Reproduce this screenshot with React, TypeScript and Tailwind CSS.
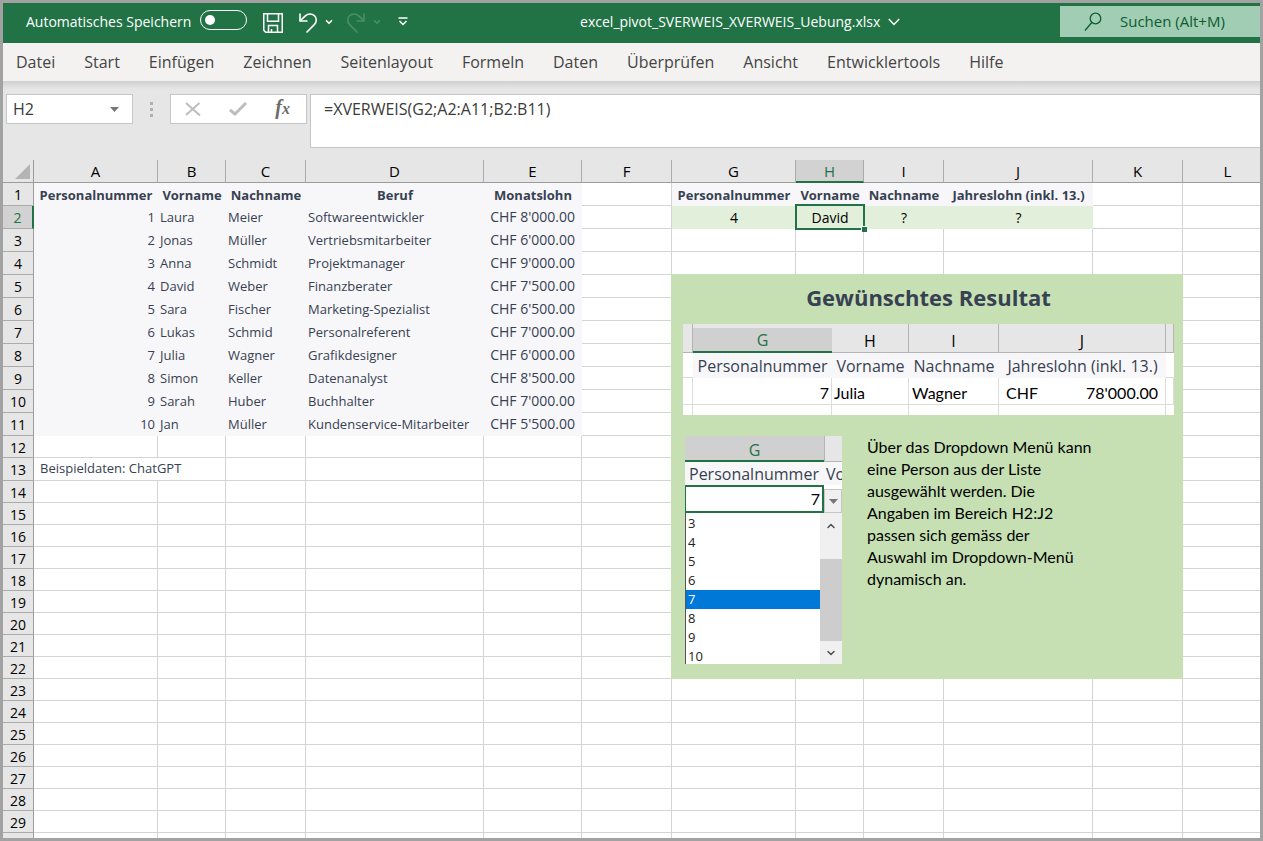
import { useState, type ReactNode } from "react";
import { ChevronDown } from "lucide-react";

const MENU = [
  "Datei",
  "Start",
  "Einfügen",
  "Zeichnen",
  "Seitenlayout",
  "Formeln",
  "Daten",
  "Überprüfen",
  "Ansicht",
  "Entwicklertools",
  "Hilfe",
];

const COLUMNS = [
  { name: "A", width: 124 },
  { name: "B", width: 68 },
  { name: "C", width: 80 },
  { name: "D", width: 178 },
  { name: "E", width: 98 },
  { name: "F", width: 90 },
  { name: "G", width: 124 },
  { name: "H", width: 68 },
  { name: "I", width: 80 },
  { name: "J", width: 149 },
  { name: "K", width: 90 },
  { name: "L", width: 90 },
];

const ROW_HEADER_WIDTH = 31;
const SHEET_WIDTH = COLUMNS.reduce((sum, column) => sum + column.width, ROW_HEADER_WIDTH);
const LAST_ROW = 29;
// one extra blank row closes the sheet at the bottom edge
const ROWS = Array.from({ length: LAST_ROW + 1 }, (_, i) => i + 1);

const STAFF_HEAD = ["Personalnummer", "Vorname", "Nachname", "Beruf", "Monatslohn"];
const STAFF = [
  ["1", "Laura", "Meier", "Softwareentwickler", "CHF 8'000.00"],
  ["2", "Jonas", "Müller", "Vertriebsmitarbeiter", "CHF 6'000.00"],
  ["3", "Anna", "Schmidt", "Projektmanager", "CHF 9'000.00"],
  ["4", "David", "Weber", "Finanzberater", "CHF 7'500.00"],
  ["5", "Sara", "Fischer", "Marketing-Spezialist", "CHF 6'500.00"],
  ["6", "Lukas", "Schmid", "Personalreferent", "CHF 7'000.00"],
  ["7", "Julia", "Wagner", "Grafikdesigner", "CHF 6'000.00"],
  ["8", "Simon", "Keller", "Datenanalyst", "CHF 8'500.00"],
  ["9", "Sarah", "Huber", "Buchhalter", "CHF 7'000.00"],
  ["10", "Jan", "Müller", "Kundenservice-Mitarbeiter", "CHF 5'500.00"],
];

const LOOKUP_HEAD = ["Personalnummer", "Vorname", "Nachname", "Jahreslohn (inkl. 13.)"];
const LOOKUP = ["4", "David", "?", "?"];

function IconButton({ label, className, children }: { label: string; className?: string; children: ReactNode }) {
  return (
    <button type="button" aria-label={label} className={`flex shrink-0 items-center justify-center ${className ?? ""}`}>
      {children}
    </button>
  );
}

function UndoIcon() {
  return (
    <svg viewBox="0 0 20 22" className="h-[22px] w-5" fill="none" stroke="currentColor" strokeWidth="1.6">
      <path d="M2 1.500v7.500h7.500" />
      <path d="M2.500 8.500L7 4.200C8.600 2.700 10.200 2 12 2c3.600 0 6.300 2.600 6.300 6 0 1.900-.7 3.300-2 4.600L8.500 20.500" />
    </svg>
  );
}

function TitleBar() {
  return (
    <header className="flex h-10 shrink-0 items-center bg-[#217346] pb-[3px] text-sm text-white">
      <div className="flex items-center pl-[23px]">
        <label htmlFor="autosave" className="whitespace-nowrap">
          Automatisches Speichern
        </label>
        <input
          id="autosave"
          type="checkbox"
          role="switch"
          className="mb-[3px] ml-[9px] h-5 w-[47px] appearance-none rounded-full border border-white before:mt-1 before:ml-1 before:block before:size-[10px] before:rounded-full before:bg-white before:content-['']"
        />
        <IconButton label="Speichern" className="ml-4 pt-[2px]">
          <svg viewBox="0 0 20 20" className="size-5" fill="none" stroke="currentColor" strokeWidth="1.5">
            <path d="M.75.75h18.500v18.500H2.750l-2-2z" />
            <path d="M4.500.75v7.500h11V.75" />
            <path d="M5.500 19v-6.500h9V19M8.500 19v-3" />
          </svg>
        </IconButton>
        <IconButton label="Rückgängig" className="ml-[15px] pt-[2px]">
          <UndoIcon />
        </IconButton>
        <IconButton label="Rückgängig Verlauf" className="ml-[6px]">
          <ChevronDown className="size-[10px]" strokeWidth={4} />
        </IconButton>
        <IconButton label="Wiederholen" className="ml-3 pt-[2px] text-[#4a8f69]">
          <span className="-scale-x-100">
            <UndoIcon />
          </span>
        </IconButton>
        <IconButton label="Wiederholen Verlauf" className="ml-[6px] text-[#4a8f69]">
          <ChevronDown className="size-[10px]" strokeWidth={4} />
        </IconButton>
        <IconButton label="Symbolleiste anpassen" className="ml-4">
          <svg viewBox="0 0 10 9" className="h-[9px] w-[10px]" fill="none" stroke="currentColor" strokeWidth="1.400">
            <path d="M.5 1h9M1.500 4L5 7.500 8.500 4" />
          </svg>
        </IconButton>
      </div>
      <button type="button" className="flex flex-1 items-center justify-center gap-2 whitespace-nowrap pl-3">
        excel_pivot_SVERWEIS_XVERWEIS_Uebung.xlsx
        <svg viewBox="0 0 12 8" className="h-2 w-3" fill="none" stroke="currentColor" strokeWidth="1.400">
          <path d="M.8 1L6 6.500 11.200 1" />
        </svg>
      </button>
      <label className="flex h-[31px] w-[200px] items-center gap-[18px] bg-[#a0cdb3] pl-6 text-[15px] text-[#0e5c2f]">
        <svg viewBox="0 0 18 20" className="h-5 w-[18px] shrink-0" fill="none" stroke="currentColor" strokeWidth="1.300">
          <circle cx="11.500" cy="6.500" r="5.300" />
          <path d="M7.800 10.500L1 18.500" />
        </svg>
        <input
          type="search"
          aria-label="Suchen"
          placeholder="Suchen (Alt+M)"
          className="w-full min-w-0 bg-transparent outline-none placeholder:text-[#0e5c2f]"
        />
      </label>
    </header>
  );
}

function FormulaBar() {
  return (
    <div className="flex shrink-0 items-start bg-[linear-gradient(to_bottom,#cfcfcf_0,#e6e6e6_8px)] pt-[13px] pb-3 pl-[3px] text-base text-[#3b3b3b]">
      <div className="flex h-[30px] w-[127px] items-center border border-[#c6c6c6] bg-white pr-[13px]">
        <input aria-label="Namenfeld" defaultValue="H2" className="w-full min-w-0 pl-[6px] outline-none" />
        <IconButton label="Namen anzeigen">
          <svg viewBox="0 0 9 5" className="h-[5px] w-[9px]" fill="#777">
            <path d="M0 0h9L4.500 5z" />
          </svg>
        </IconButton>
      </div>
      <div className="mt-2 ml-[17px] flex flex-col gap-[3px]">
        <span className="size-[3px] bg-[#b0b0b0]" />
        <span className="size-[3px] bg-[#b0b0b0]" />
        <span className="size-[3px] bg-[#b0b0b0]" />
      </div>
      <div className="ml-[17px] flex h-[30px] w-[137px] items-center justify-between border border-[#c6c6c6] bg-white pr-4 pl-[14px]">
        <IconButton label="Abbrechen">
          <svg viewBox="0 0 16 14" className="h-[14px] w-4" fill="none" stroke="#bdbdbd" strokeWidth="2">
            <path d="M1 1l14 12.500M14.500 1L1 13" />
          </svg>
        </IconButton>
        <IconButton label="Eingeben">
          <svg viewBox="0 0 18 14" className="h-[14px] w-[18px]" fill="none" stroke="#bdbdbd" strokeWidth="3">
            <path d="M1 8l5 4L17 1" />
          </svg>
        </IconButton>
        <button
          type="button"
          aria-label="Funktion einfügen"
          className="font-['Liberation_Serif',serif] text-xl leading-5 font-bold text-[#6b6b6b] italic"
        >
          f<span className="text-base">x</span>
        </button>
      </div>
      <textarea
        aria-label="Bearbeitungsleiste"
        defaultValue="=XVERWEIS(G2;A2:A11;B2:B11)"
        className="ml-[3px] h-[54px] min-w-0 flex-1 resize-none border border-r-0 border-[#c6c6c6] bg-white px-[13px] py-1 leading-5 outline-none"
      />
    </div>
  );
}

function PreviewTable() {
  const line = "border-r border-b border-[#dcdcdc]";
  const head = "border-r border-b border-[#b4b4b4] bg-[#e6e6e6] font-normal";

  return (
    <table className="w-full table-fixed border-separate border-spacing-0 bg-white text-base leading-5 whitespace-nowrap text-black">
      <colgroup>
        <col className="w-[10px]" />
        <col className="w-[139px]" />
        <col className="w-[77px]" />
        <col className="w-[90px]" />
        <col className="w-[167px]" />
        <col />
      </colgroup>
      <thead>
        <tr className="h-[29px]">
          <td className={head} />
          <th className="border-t-4 border-b-2 border-t-[#e6e6e6] border-b-[#217346] bg-[#d0d0d0] font-normal text-[#217346]">
            G
          </th>
          <th className={`${head} pt-[6px]`}>H</th>
          <th className={`${head} pt-[6px]`}>I</th>
          <th className={`${head} pt-[6px]`}>J</th>
          <td className={head} />
        </tr>
      </thead>
      <tbody>
        <tr className="h-[25px] text-[#374151]">
          <td className="border-b border-[#dcdcdc]" />
          {LOOKUP_HEAD.map((text) => (
            <td key={text} className="bg-[#f7f7fa] text-center font-medium">
              {text}
            </td>
          ))}
          <td className="border-b border-[#dcdcdc]" />
        </tr>
        <tr className="h-[27px] font-['Lato',sans-serif]">
          <td className={line} />
          <td className={`${line} pt-1 pr-[2px] text-right`}>7</td>
          <td className={`${line} pt-1 pl-[2px]`}>Julia</td>
          <td className={`${line} pt-1 pl-[3px]`}>Wagner</td>
          <td className={`${line} px-[7px] pt-1`}>
            <div className="flex justify-between">
              <span>CHF</span>
              <span>78'000.00</span>
            </div>
          </td>
          <td className={line} />
        </tr>
        <tr className="h-[10px]">
          <td className="border-r border-[#dcdcdc]" />
          <td className="border-r border-[#dcdcdc]" />
          <td className="border-r border-[#dcdcdc]" />
          <td className="border-r border-[#dcdcdc]" />
          <td className="border-r border-[#dcdcdc]" />
          <td />
        </tr>
      </tbody>
    </table>
  );
}

function DropdownPreview() {
  const [picked, setPicked] = useState("7");

  return (
    <div className="w-[157px] shrink-0 overflow-hidden bg-white">
      <div className="flex h-[26px] text-base leading-6">
        <div className="w-[139px] border-b-2 border-[#217346] bg-[#d0d0d0] pt-[2px] text-center text-[#217346]">G</div>
        <div className="flex-1 border-b border-l border-[#b4b4b4] bg-[#e6e6e6]" />
      </div>
      <div className="flex h-[23px] items-center bg-[#f7f7fa] text-base font-medium whitespace-nowrap text-[#374151]">
        <div className="w-[139px] shrink-0 pl-1">Personalnummer</div>
        <div className="pl-[2px]">Vo</div>
      </div>
      <div className="flex h-7">
        <label
          htmlFor="nummer"
          className="w-[139px] border-2 border-l border-[#217346] pr-[2px] text-right font-['Lato',sans-serif] text-base leading-6 text-black"
        >
          {picked}
        </label>
        <IconButton label="Liste öffnen" className="mt-1 flex-1 border border-[#c6c6c6] bg-[#f0f0f0]">
          <svg viewBox="0 0 9 5" className="h-[5px] w-[9px]" fill="#777">
            <path d="M0 0h9L4.500 5z" />
          </svg>
        </IconButton>
      </div>
      <div className="flex h-[151px] border-l border-[#555]">
        <select
          id="nummer"
          size={8}
          value={picked}
          onChange={(event) => setPicked(event.target.value)}
          className="h-[152px] w-[134px] shrink-0 appearance-none overflow-hidden bg-white pt-px text-[13px] text-[#222] outline-none"
        >
          {["3", "4", "5", "6", "7", "8", "9", "10"].map((value) => (
            <option
              key={value}
              value={value}
              className="h-[19px] min-h-0 px-[2px] py-0 leading-[19px] checked:bg-[linear-gradient(#0078d7,#0078d7)] checked:text-white"
            >
              {value}
            </option>
          ))}
        </select>
        <div className="flex flex-1 flex-col bg-[#f0f0f0] text-[#505050]">
          <IconButton label="Nach oben" className="h-[46px] pb-5">
            <ChevronDown className="size-3 rotate-180" strokeWidth={3} />
          </IconButton>
          <div className="flex-1 bg-[#cdcdcd]" />
          <IconButton label="Nach unten" className="h-[23px]">
            <ChevronDown className="size-3" strokeWidth={3} />
          </IconButton>
        </div>
      </div>
    </div>
  );
}

function ResultPanel() {
  return (
    <div className="pt-[7px] pr-[9px] pl-[11px]">
      <h2 className="text-center text-[22px] leading-[30px] font-bold text-[#374151]">Gewünschtes Resultat</h2>
      <div className="mt-3">
        <PreviewTable />
      </div>
      <div className="mt-[21px] flex gap-[25px] pl-[2px]">
        <DropdownPreview />
        <p className="font-['Lato',sans-serif] text-base leading-[22px] text-black">
          Über das Dropdown Menü kann
          <br />
          eine Person aus der Liste
          <br />
          ausgewählt werden. Die
          <br />
          Angaben im Bereich H2:J2
          <br />
          passen sich gemäss der
          <br />
          Auswahl im Dropdown-Menü
          <br />
          dynamisch an.
        </p>
      </div>
    </div>
  );
}

function SheetRow({ row }: { row: number }) {
  const staff = row <= 11;
  const inPanel = row >= 5 && row <= 22;
  const tall = row <= 11 || row === 13;

  return (
    <tr className={tall ? "h-[23px]" : "h-[22px]"}>
      <th
        className={
          row === 2
            ? "border-r-2 border-b border-r-[#217346] border-b-[#ababab] bg-[#d2d2d2] pt-[2px] text-sm leading-[18px] font-normal text-[#217346]"
            : "border-r border-b border-r-[#9b9b9b] border-b-[#ababab] bg-[#e6e6e6] pt-[2px] text-sm leading-[18px] font-normal text-black"
        }
      >
        {row <= LAST_ROW && row}
      </th>
      {COLUMNS.map((column, index) => {
        const name = column.name;
        if (row === 13 && name === "B") return null;
        if (inPanel && "GHIJK".includes(name)) {
          if (row !== 5 || name !== "G") return null;
          return (
            <td key={name} colSpan={5} rowSpan={18} className="bg-[#c6e0b4] align-top">
              <ResultPanel />
            </td>
          );
        }
        if (row === 13 && name === "A") {
          return (
            <td key={name} colSpan={2} className="border-r border-b border-[#d4d4d4] pb-[2px] pl-[6px]">
              Beispieldaten: ChatGPT
            </td>
          );
        }
        if (staff && index < 5) {
          if (row === 1) {
            return (
              <th key={name} className="bg-[#f7f7fa] font-bold">
                {STAFF_HEAD[index]}
              </th>
            );
          }
          return (
            <td
              key={name}
              className={
                index === 0
                  ? "bg-[#f7f7fa] pr-[3px] pb-[2px] text-right"
                  : index === 4
                    ? "bg-[#f7f7fa] pr-[7px] pb-[2px] text-right text-sm leading-[18px]"
                    : "bg-[#f7f7fa] pb-[2px] pl-[2px]"
              }
            >
              {STAFF[row - 2][index]}
            </td>
          );
        }
        if (row <= 2 && index >= 6 && index <= 9) {
          if (row === 1) {
            return (
              <th key={name} className="bg-[#f7f7fa] font-bold">
                {LOOKUP_HEAD[index - 6]}
              </th>
            );
          }
          return (
            <td key={name} className="relative bg-[#e2efda] text-center text-sm leading-5 text-black">
              {LOOKUP[index - 6]}
              {name === "H" && (
                <span className="pointer-events-none absolute -inset-x-px -top-[2px] -bottom-px z-10 border-2 border-[#217346]">
                  <span className="absolute -right-1 -bottom-1 size-[6px] border-t border-l border-white bg-[#217346]" />
                </span>
              )}
            </td>
          );
        }
        const edge =
          inPanel && name === "F"
            ? "border-r-[#c6e0b4] border-b-[#d4d4d4]"
            : row === 4 && "GHIJK".includes(name)
              ? "border-r-[#d4d4d4] border-b-[#c6e0b4]"
              : "border-[#d4d4d4]";
        return <td key={name} className={`border-r border-b ${edge}`} />;
      })}
    </tr>
  );
}

function Sheet() {
  return (
    <div className="min-h-0 flex-1 overflow-hidden bg-white">
      <table
        className="table-fixed border-separate border-spacing-0 text-[13px] leading-[18px] whitespace-nowrap text-[#374151]"
        style={{ width: SHEET_WIDTH }}
      >
        <colgroup>
          <col style={{ width: ROW_HEADER_WIDTH }} />
          {COLUMNS.map((column) => (
            <col key={column.name} style={{ width: column.width }} />
          ))}
        </colgroup>
        <thead>
          <tr className="h-[23px] text-[15px] leading-5 text-black">
            <td className="border-r border-b border-[#9b9b9b] bg-[#e6e6e6] pr-[3px]">
              <svg viewBox="0 0 15 15" className="ml-auto size-[15px]" fill="#b4b4b4">
                <path d="M15 0v15H0z" />
              </svg>
            </td>
            {COLUMNS.map((column) => (
              <th
                key={column.name}
                className={
                  column.name === "H"
                    ? "border-r border-b-2 border-r-[#ababab] border-b-[#217346] bg-[#d2d2d2] font-normal text-[#217346]"
                    : "border-r border-b border-r-[#ababab] border-b-[#9b9b9b] bg-[#e6e6e6] font-normal"
                }
              >
                {column.name}
              </th>
            ))}
          </tr>
        </thead>
        <tbody>
          {ROWS.map((row) => (
            <SheetRow key={row} row={row} />
          ))}
        </tbody>
      </table>
    </div>
  );
}

export default function App() {
  return (
    <div className="flex h-screen w-full flex-col overflow-hidden border-[3px] border-[#a2a2a2] bg-[#e6e6e6] font-['Open_Sans',sans-serif]">
      <TitleBar />
      <nav className="flex h-[38px] shrink-0 items-center gap-[29px] bg-[#f3f2f1] px-[13px] text-base text-[#444]">
        {MENU.map((item) => (
          <button key={item} type="button" className="whitespace-nowrap">
            {item}
          </button>
        ))}
      </nav>
      <FormulaBar />
      <Sheet />
    </div>
  );
}
